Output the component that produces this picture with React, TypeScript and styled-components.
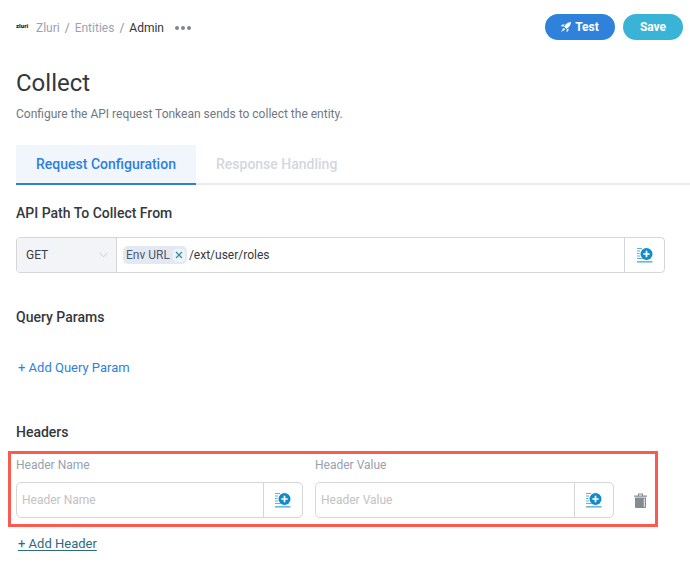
import styled, { createGlobalStyle } from "styled-components";

const GlobalStyle = createGlobalStyle`
  html, body {
    margin: 0;
    padding: 0;
    background: #fff;
    font-family: Roboto, "Liberation Sans", sans-serif;
  }
`;

const Page = styled.div`
  width: 690px;
  height: 571px;
  overflow: hidden;
  box-sizing: border-box;
`;

const TopBar = styled.div`
  display: flex;
  align-items: center;
  justify-content: space-between;
  padding: 14px 7px 0 16px;
  height: 40px;
  box-sizing: border-box;
`;

const Crumbs = styled.div`
  display: flex;
  align-items: center;
  margin-top: 2px;
  font-size: 12px;
  color: #9aa3b2;
`;

const Logo = styled.span`
  font-size: 6px;
  font-weight: 900;
  color: #222;
  width: 20px;
  margin-top: -6px;
`;

const Sep = styled.span`
  margin: 0 5px;
  color: #8b93a1;
`;

const Current = styled.span`
  color: #2f3439;
`;

const Dots = styled.span`
  display: flex;
  gap: 2px;
  margin-left: 11px;
  i {
    width: 4px;
    height: 4px;
    border-radius: 50%;
    background: #80858f;
  }
`;

const Actions = styled.div`
  display: flex;
  gap: 8px;
`;

const PillButton = styled.button<{ $bg: string; $width: number }>`
  display: flex;
  align-items: center;
  justify-content: center;
  gap: 4px;
  width: ${(p) => p.$width}px;
  height: 26px;
  border: 0;
  padding: 0;
  border-radius: 13px;
  background: ${(p) => p.$bg};
  color: #fff;
  font: 700 12px Roboto, sans-serif;
`;

const Title = styled.h1`
  margin: 27px 0 0 16px;
  font-size: 24px;
  line-height: 32px;
  font-weight: 400;
  color: #34383d;
`;

const Description = styled.p`
  margin: 7px 0 0 16px;
  font-size: 12px;
  line-height: 16px;
  color: #6f7782;
`;

const Tabs = styled.div`
  display: flex;
  margin: 23px 0 0 16px;
  border-bottom: 2px solid #e8eaee;
`;

const Tab = styled.div<{ $active?: boolean }>`
  width: ${(p) => (p.$active ? "180px" : "auto")};
  height: 38px;
  margin-bottom: -2px;
  padding: ${(p) => (p.$active ? "0" : "0 0 0 20px")};
  display: flex;
  align-items: center;
  justify-content: ${(p) => (p.$active ? "center" : "flex-start")};
  font-size: 14px;
  font-weight: 500;
  color: ${(p) => (p.$active ? "#2e7fdc" : "#d3d7de")};
  background: ${(p) => (p.$active ? "#f1f6fd" : "transparent")};
  border-bottom: 2px solid ${(p) => (p.$active ? "#2e7fdc" : "transparent")};
`;

const Section = styled.div<{ $top: number; $indent?: number }>`
  margin: ${(p) => p.$top}px 0 0 ${(p) => p.$indent ?? 16}px;
`;

const SectionTitle = styled.div`
  font-size: 14px;
  line-height: 16px;
  font-weight: 500;
  color: #34383d;
`;

const PathField = styled.div`
  display: flex;
  width: 649px;
  height: 36px;
  margin-top: 16px;
  box-sizing: border-box;
  border: 1px solid #d6d6d6;
  border-radius: 4px;
`;

const Method = styled.div`
  display: flex;
  align-items: center;
  justify-content: space-between;
  width: 100px;
  padding: 0 8px 0 9px;
  box-sizing: border-box;
  background: #f3f4f8;
  border-right: 1px solid #d6d6d6;
  border-radius: 3px 0 0 3px;
  font-size: 12px;
  color: #3b3f45;
`;

const PathValue = styled.div`
  flex: 1;
  display: flex;
  align-items: center;
  padding-left: 6px;
  font-size: 12px;
  color: #34383d;
`;

const Token = styled.span`
  display: flex;
  align-items: center;
  height: 18px;
  padding: 0 2px 0 3px;
  margin-right: 2px;
  border-radius: 5px;
  background: #e3e9f3;
  color: #50586a;
`;

const TokenClose = styled.span`
  display: flex;
  align-items: center;
  justify-content: center;
  width: 12px;
  height: 13px;
  margin-left: 3px;
  border-radius: 4px;
  background: #f1f5f9;
`;

const InsertButton = styled.div<{ $width: number }>`
  display: flex;
  align-items: center;
  justify-content: center;
  flex: 0 0 auto;
  box-sizing: border-box;
  width: ${(p) => p.$width}px;
  height: 100%;
  border-left: 1px solid #d6d6d6;
`;

const AddLink = styled.a<{ $underline?: boolean }>`
  display: block;
  font-size: 13px;
  line-height: 16px;
  color: ${(p) => (p.$underline ? "#2d6c7c" : "#2e7fdc")};
  text-decoration: ${(p) => (p.$underline ? "underline" : "none")};
  text-underline-offset: 2px;
`;

const Highlight = styled.div`
  display: grid;
  grid-template-columns: 287px 299px auto;
  column-gap: 12px;
  width: 650px;
  height: 76px;
  margin: 11px 0 0 8px;
  padding: 4px 0 0 5px;
  box-sizing: border-box;
  border: 3px solid #fb5a4e;
`;

const Column = styled.div`
  display: flex;
  flex-direction: column;
`;

const FieldLabel = styled.div`
  font-size: 12px;
  line-height: 14px;
  color: #98a1b0;
`;

const FieldBox = styled.div`
  display: flex;
  height: 36px;
  margin-top: 10px;
  box-sizing: border-box;
  border: 1px solid #d6d6d6;
  border-radius: 5px;
`;

const Placeholder = styled.div`
  flex: 1;
  display: flex;
  align-items: center;
  padding-left: 5px;
  font-size: 12px;
  color: #c2c2c2;
`;

const TrashSlot = styled.div`
  display: flex;
  align-items: center;
  justify-content: center;
  width: 13px;
  height: 36px;
  margin-top: 24px;
  margin-left: 8px;
`;

const InsertIcon = () => (
  <svg width="16" height="15" viewBox="0 0 16 15">
    <path d="M0 .5h5M0 3h3M0 5.500h2.500M0 8h3M0 10.500h5" stroke="#5fb0de" strokeWidth="1" />
    <rect x="0" y="13" width="15.500" height="1.600" fill="#6db6e0" />
    <circle cx="9.500" cy="6" r="6" fill="#118ccb" />
    <path d="M9.500 2.800v6.400M6.300 6h6.400" stroke="#fff" strokeWidth="1.700" />
  </svg>
);

// rocket seen on the diagonal, with the crossing fins that read as an X
const TestIcon = () => (
  <svg width="10" height="10" viewBox="0 0 10 10" fill="#fff">
    <path d="M10 0C7.900.2 6 1 4.700 2.500L3 4.500 5.500 7l2-1.700C9 4 9.800 2.100 10 0z" />
    <path d="M3.600 2.200L1 2.800 0 4.300l2.300.2zM7.800 6.400l-.6 2.600-1.500 1-.2-2.300z" />
    <path d="M2.600 5.800L0 10l4.200-2.600z" />
  </svg>
);

const Trash = () => (
  <svg width="13" height="15" viewBox="0 0 13 15">
    <path d="M0 2.500h13v1.200H0zM4 .5h5v2H8V1.500H5v1H4z" fill="#858b93" />
    <path d="M1 4.500h11V14a1 1 0 0 1-1 1H2a1 1 0 0 1-1-1z" fill="#858b93" />
    <path d="M10.300 5.500v8.500" stroke="#fff" strokeWidth="0.900" />
  </svg>
);

const Chevron = () => (
  <svg width="9" height="6" viewBox="0 0 9 6" fill="none">
    <path d="M.7 1l3.800 3.800L8.300 1" stroke="#c9cdd3" strokeWidth="1" />
  </svg>
);

const CloseX = () => (
  <svg width="8" height="8" viewBox="0 0 8 8" fill="none">
    <path d="M1 1l6 6M7 1L1 7" stroke="#2a93a8" strokeWidth="1.300" />
  </svg>
);

const HeaderField = ({ name }: { name: string }) => (
  <Column>
    <FieldLabel>{name}</FieldLabel>
    <FieldBox>
      <Placeholder>{name}</Placeholder>
      <InsertButton $width={39}>
        <InsertIcon />
      </InsertButton>
    </FieldBox>
  </Column>
);

export default function App() {
  return (
    <Page>
      <GlobalStyle />
      <TopBar>
        <Crumbs>
          <Logo>zluri</Logo>
          <span>Zluri</span>
          <Sep>/</Sep>
          <span>Entities</span>
          <Sep>/</Sep>
          <Current>Admin</Current>
          <Dots>
            <i />
            <i />
            <i />
          </Dots>
        </Crumbs>
        <Actions>
          <PillButton $bg="#2e82dc" $width={70}>
            <TestIcon />
            Test
          </PillButton>
          <PillButton $bg="#3ab4d6" $width={60}>
            Save
          </PillButton>
        </Actions>
      </TopBar>
      <Title>Collect</Title>
      <Description>Configure the API request Tonkean sends to collect the entity.</Description>
      <Tabs>
        <Tab $active>Request Configuration</Tab>
        <Tab>Response Handling</Tab>
      </Tabs>
      <Section $top={20}>
        <SectionTitle>API Path To Collect From</SectionTitle>
        <PathField>
          <Method>
            GET
            <Chevron />
          </Method>
          <PathValue>
            <Token>
              Env URL
              <TokenClose>
                <CloseX />
              </TokenClose>
            </Token>
            /ext/user/roles
          </PathValue>
          <InsertButton $width={40}>
            <InsertIcon />
          </InsertButton>
        </PathField>
      </Section>
      <Section $top={36}>
        <SectionTitle>Query Params</SectionTitle>
      </Section>
      <Section $top={35} $indent={18}>
        <AddLink>+ Add Query Param</AddLink>
      </Section>
      <Section $top={48}>
        <SectionTitle>Headers</SectionTitle>
      </Section>
      <Highlight>
        <HeaderField name="Header Name" />
        <HeaderField name="Header Value" />
        <TrashSlot>
          <Trash />
        </TrashSlot>
      </Highlight>
      <Section $top={9} $indent={18}>
        <AddLink $underline>+ Add Header</AddLink>
      </Section>
    </Page>
  );
}
